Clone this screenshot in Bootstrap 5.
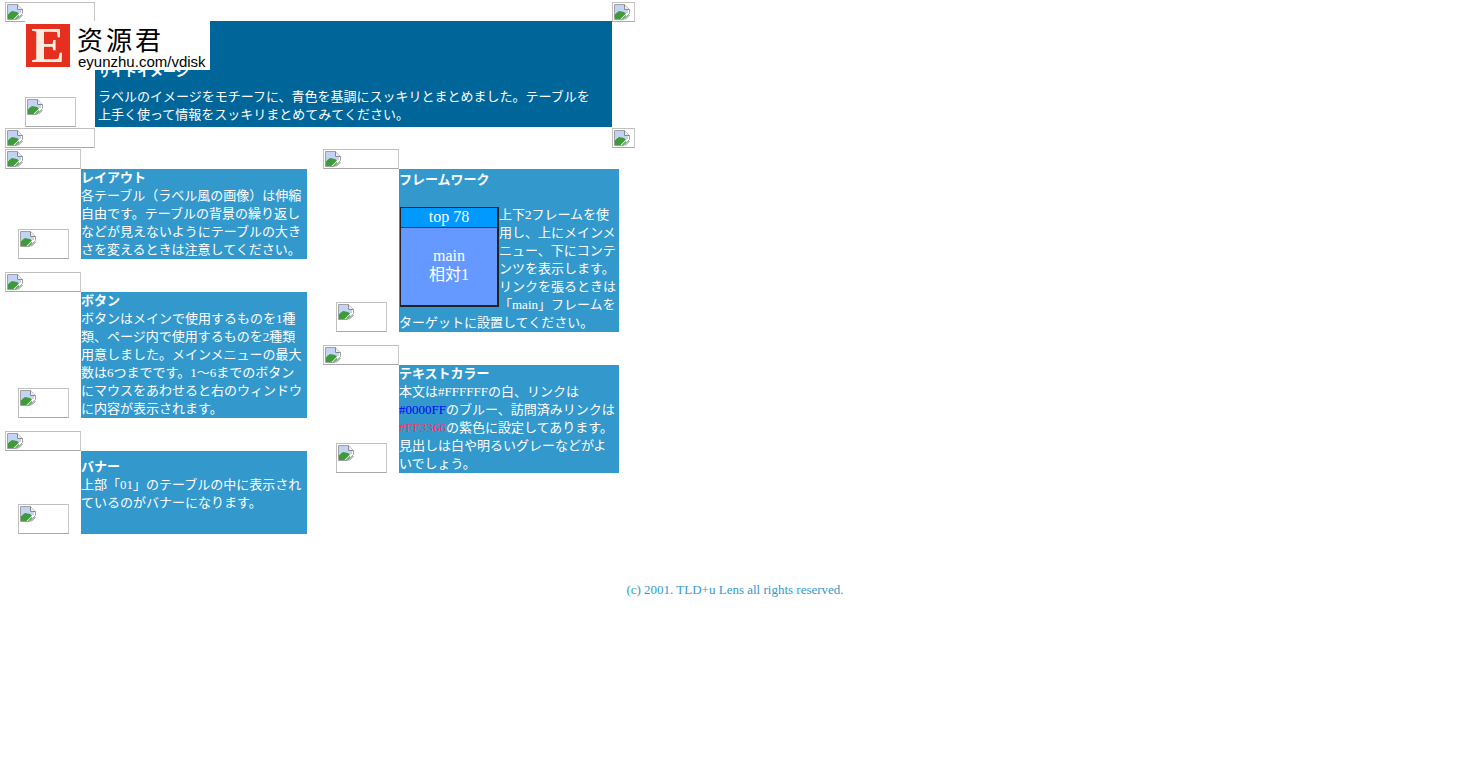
<!DOCTYPE html>
<html lang="ja">
<head>
  <meta charset="UTF-8" />
  <meta name="viewport" content="width=device-width, initial-scale=1.0"/>
  <title>サイトイメージ</title>
  <link href="https://cdn.jsdelivr.net/npm/bootstrap@5.3.0/dist/css/bootstrap.min.css" rel="stylesheet"/>
  <style>
    body {
      background-color: #fff;
      color: #fff;
      font-family: "Liberation Serif", "Noto Sans CJK JP", serif;
      font-size: 13px;
      line-height: 18px;
    }

    /* 画像切れのプレースホルダー */
    .broken-img {
      display: block;
      border: 1px solid #c0c0c0;
      border-right-color: #c8c8c8;
      border-bottom-color: #a8a8a8;
      padding: 1px;
      overflow: hidden;
      background-color: #fff;
    }
    .broken-img svg { display: block; width: 16px; height: 16px; }
    .size-wide { width: 90px; height: 20px; }
    .size-corner { width: 23px; height: 20px; }
    .size-head { width: 76px; height: 20px; }
    .size-foot { width: 51px; height: 30px; }

    .panel-top {
      display: grid;
      grid-template-columns: 90px 517px 23px;
      grid-template-rows: 20px 106px 22px;
      margin: 1px 0 0 5px;
      width: 630px;
    }
    .panel-top .broken-img { margin-top: 1px; }
    .side-cell { display: flex; align-items: flex-end; }
    .side-cell .broken-img { margin-left: 20px; margin-top: 0; }

    .hero-text {
      background-color: #006699;
      padding: 0 15px 3px 3px;
      display: flex;
      flex-direction: column;
      justify-content: flex-end;
    }
    .hero-text p { margin: 0; }
    h2.label-title {
      font-family: inherit;
      font-size: 13px;
      line-height: 18px;
      font-weight: 700;
      color: #fff;
      margin-top: 0;
    }
    .hero-text h2.label-title { margin-bottom: 7px; }

    .columns { margin-left: 5px; gap: 16px; }
    .col-left { width: 302px; }
    .col-right { width: 296px; }

    .label-block { display: grid; margin-bottom: 13px; }
    .col-left .label-block { grid-template-columns: 76px 226px; }
    .col-right .label-block { grid-template-columns: 76px 220px; }
    .label-head { grid-column: 1 / 3; }
    .label-side { display: flex; align-items: flex-end; padding-left: 13px; }
    .label-body { background-color: #3399cc; }
    .label-body h2.label-title { margin-bottom: 0; }
    .label-body p { margin: 0; }
    .body-banner { height: 83px; padding-top: 7px; }
    .body-frame { padding-top: 2px; }
    .blank-line { height: 17px; }

    .frame-demo {
      float: left;
      width: 99px;
      height: 100px;
      margin: 1px 0 0 1px;
      border: 1px solid #222;
      border-right-width: 2px;
      border-bottom-width: 2px;
      font-size: 16px;
      line-height: 19px;
      text-align: center;
    }
    .frame-top {
      background-color: #0099ff;
      height: 20px;
      line-height: 18px;
      border-bottom: 1px solid #552244;
    }
    .frame-main {
      background-color: #6699ff;
      height: 77px;
      padding-bottom: 3px;
      display: flex;
      flex-direction: column;
      justify-content: center;
    }

    .link-sample { color: #0000ff; }
    .vlink-sample { color: #ff3366; }

    .site-footer {
      margin-top: 47px;
      color: #3399cc;
      text-align: center;
    }

    /* バナー（透かし）は他の要素の上に重なる */
    .banner-over {
      position: absolute;
      left: 25px;
      top: 21px;
      width: 185px;
      height: 49px;
      background-color: #fff;
      color: #000;
    }
    .banner-e {
      position: absolute;
      left: 1px;
      top: 3px;
      width: 44px;
      height: 43px;
      background-color: #e5301f;
      color: #fbeee0;
      font-family: "Liberation Serif", serif;
      font-weight: 700;
      font-size: 50px;
      line-height: 43px;
      text-align: center;
    }
    .banner-cn {
      position: absolute;
      left: 52px;
      top: 2px;
      font-family: "Noto Sans CJK SC", sans-serif;
      font-weight: 400;
      font-size: 26px;
      line-height: 32px;
      letter-spacing: 3px;
      white-space: nowrap;
    }
    .banner-url {
      position: absolute;
      left: 53px;
      top: 32px;
      font-family: "Liberation Sans", sans-serif;
      font-size: 15px;
      line-height: 18px;
      white-space: nowrap;
    }
  </style>
</head>
<body class="position-relative">

  <svg width="0" height="0" class="position-absolute">
    <symbol id="broken" viewBox="0 0 16 16">
      <path d="M.5 .5h10l5 5v4l-6 6H.5z" fill="#fff" stroke="#a0a0a0"/>
      <path d="M10.500 .5v5h5" fill="#eee" stroke="#888"/>
      <path d="M1 1h9v5h4v3H1z" fill="#c3d3f5"/>
      <path d="M1 15v-5l4-3 5 1 2 1.500-5.500 5.500z" fill="#3f9a3a"/>
      <path d="M10 15.500l5.500-5.500v5.500z" fill="#fff"/>
      <path d="M11 15.500l4.500-4.500" stroke="#777"/>
      <path d="M8.500 15l3.500-3.500" stroke="#5fa558" stroke-width="1.500"/>
    </symbol>
  </svg>

  <!-- 上部 01 -->
  <div class="panel-top">
    <span class="broken-img size-wide"><svg><use href="#broken"/></svg></span>
    <span></span>
    <span class="broken-img size-corner"><svg><use href="#broken"/></svg></span>

    <div class="side-cell">
      <span class="broken-img size-foot"><svg><use href="#broken"/></svg></span>
    </div>
    <div class="hero-text">
      <h2 class="label-title">サイトイメージ</h2>
      <p>ラベルのイメージをモチーフに、青色を基調にスッキリとまとめました。テーブルを上手く使って情報をスッキリまとめてみてください。</p>
    </div>
    <span></span>

    <span class="broken-img size-wide"><svg><use href="#broken"/></svg></span>
    <span></span>
    <span class="broken-img size-corner"><svg><use href="#broken"/></svg></span>
  </div>

  <div class="banner-over">
    <div class="banner-e">E</div>
    <div class="banner-cn">资源君</div>
    <div class="banner-url">eyunzhu.com/vdisk</div>
  </div>

  <div class="d-flex align-items-start columns">
    <!-- 左カラム -->
    <div class="col-left">
      <div class="label-block">
        <div class="label-head"><span class="broken-img size-head"><svg><use href="#broken"/></svg></span></div>
        <div class="label-side"><span class="broken-img size-foot"><svg><use href="#broken"/></svg></span></div>
        <div class="label-body">
          <h2 class="label-title">レイアウト</h2>
          <p>各テーブル（ラベル風の画像）は伸縮自由です。テーブルの背景の繰り返しなどが見えないようにテーブルの大きさを変えるときは注意してください。</p>
        </div>
      </div>

      <div class="label-block">
        <div class="label-head"><span class="broken-img size-head"><svg><use href="#broken"/></svg></span></div>
        <div class="label-side"><span class="broken-img size-foot"><svg><use href="#broken"/></svg></span></div>
        <div class="label-body">
          <h2 class="label-title">ボタン</h2>
          <p>ボタンはメインで使用するものを1種類、ページ内で使用するものを2種類用意しました。メインメニューの最大数は6つまでです。1～6までのボタンにマウスをあわせると右のウィンドウに内容が表示されます。</p>
        </div>
      </div>

      <div class="label-block mb-0">
        <div class="label-head"><span class="broken-img size-head"><svg><use href="#broken"/></svg></span></div>
        <div class="label-side"><span class="broken-img size-foot"><svg><use href="#broken"/></svg></span></div>
        <div class="label-body body-banner">
          <h2 class="label-title">バナー</h2>
          <p>上部「01」のテーブルの中に表示されているのがバナーになります。</p>
        </div>
      </div>
    </div>

    <!-- 右カラム -->
    <div class="col-right">
      <div class="label-block">
        <div class="label-head"><span class="broken-img size-head"><svg><use href="#broken"/></svg></span></div>
        <div class="label-side"><span class="broken-img size-foot"><svg><use href="#broken"/></svg></span></div>
        <div class="label-body body-frame">
          <h2 class="label-title">フレームワーク</h2>
          <div class="blank-line"></div>
          <div class="frame-demo">
            <div class="frame-top">top 78</div>
            <div class="frame-main"><div>main</div><div>相対1</div></div>
          </div>
          <p>上下2フレームを使用し、上にメインメニュー、下にコンテンツを表示します。リンクを張るときは「main」フレームをターゲットに設置してください。</p>
        </div>
      </div>

      <div class="label-block mb-0">
        <div class="label-head"><span class="broken-img size-head"><svg><use href="#broken"/></svg></span></div>
        <div class="label-side"><span class="broken-img size-foot"><svg><use href="#broken"/></svg></span></div>
        <div class="label-body">
          <h2 class="label-title">テキストカラー</h2>
          <p>本文は#FFFFFFの白、リンクは<span class="link-sample">#0000FF</span>のブルー、訪問済みリンクは<span class="vlink-sample">#FF3366</span>の紫色に設定してあります。見出しは白や明るいグレーなどがよいでしょう。</p>
        </div>
      </div>
    </div>
  </div>

  <div class="site-footer">(c) 2001. TLD+u Lens all rights reserved.</div>

  <script src="https://cdn.jsdelivr.net/npm/bootstrap@5.3.0/dist/js/bootstrap.bundle.min.js"></script>
</body>
</html>
